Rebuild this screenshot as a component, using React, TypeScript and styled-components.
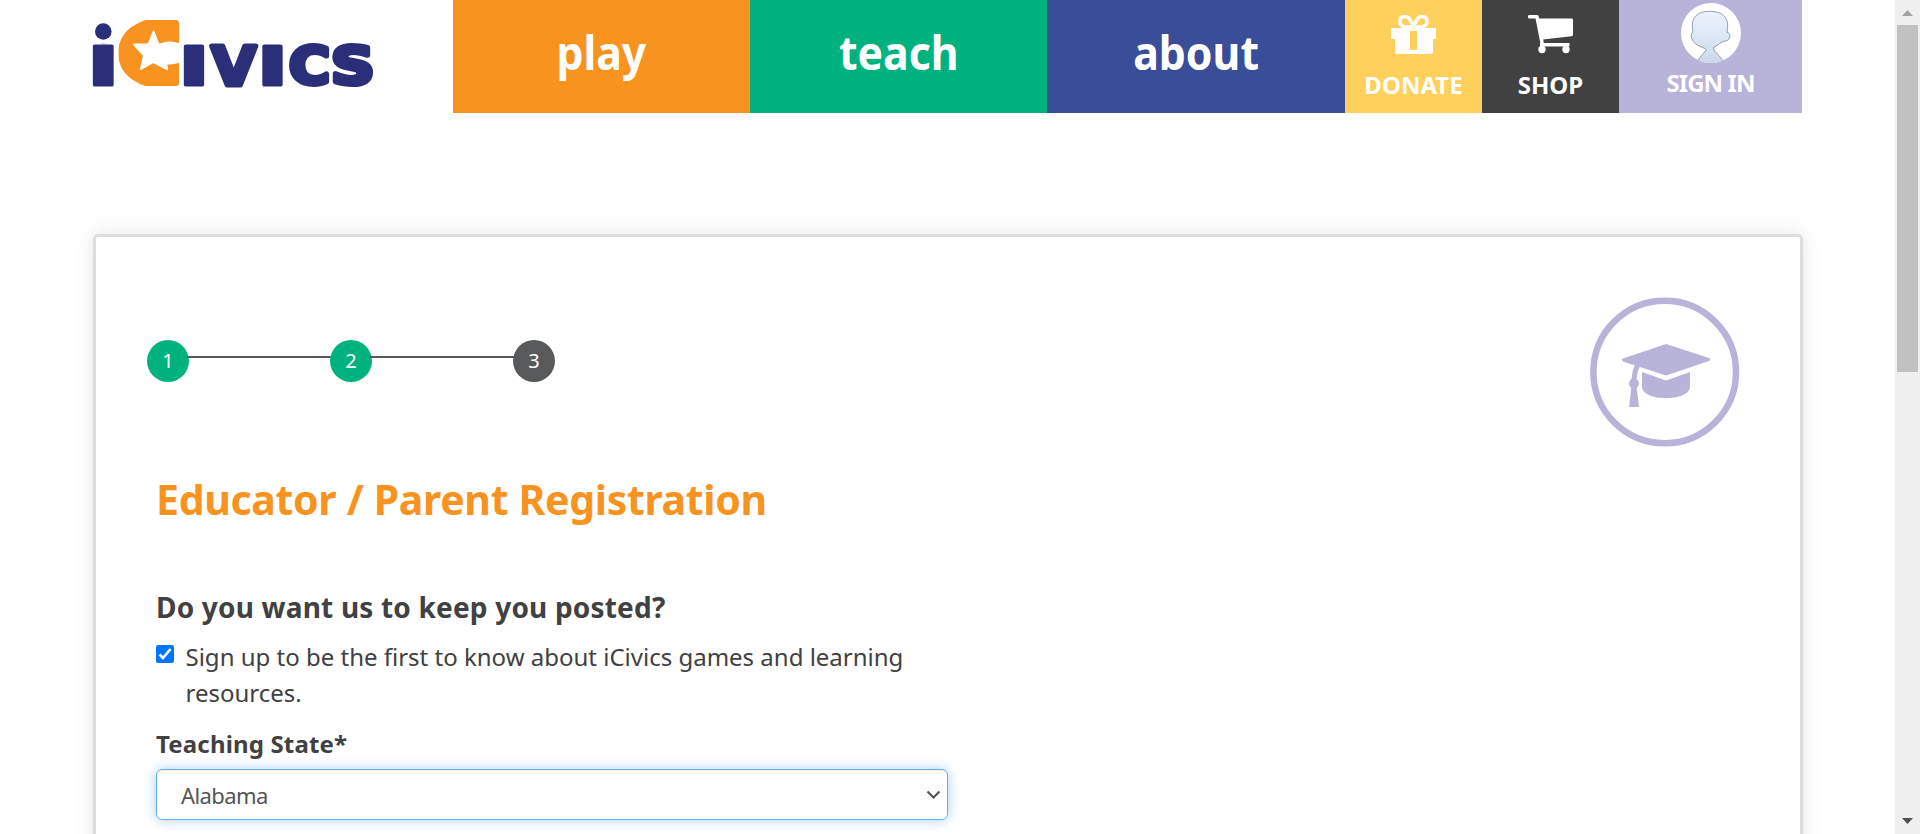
import React from "react";
import styled, { createGlobalStyle, css } from "styled-components";

const GlobalStyle = createGlobalStyle`
  * { box-sizing: border-box; }
  html, body { margin: 0; padding: 0; }
  body {
    background: #fff;
    color: #414042;
    font-family: "Noto Sans", sans-serif;
    font-size: 24px;
    overflow: hidden;
  }
`;

const Shell = styled.div`
  display: flex;
  height: 834px;
  overflow: hidden;
`;

const Page = styled.div`
  flex: 1;
  display: flex;
  flex-direction: column;
  padding: 0 92px 0 93px;
  overflow: hidden;
`;

const Header = styled.header`
  display: flex;
  height: 113px;
  flex-shrink: 0;
`;

const Brand = styled.a`
  width: 360px;
  padding-top: 15px;
`;

const NavLink = styled.a<{ $bg: string; $w: number }>`
  display: flex;
  align-items: center;
  justify-content: center;
  width: ${(p) => p.$w}px;
  background: ${(p) => p.$bg};
  color: #fff;
  font-size: 47px;
  font-weight: 700;
  line-height: 60px;
  padding-bottom: 10px;
`;

const NavWord = styled.span<{ $squeeze: number }>`
  display: inline-block;
  transform: scaleX(${(p) => p.$squeeze});
`;

const Action = styled.a<{ $bg: string; $w: number; $top: number; $gap: number }>`
  display: flex;
  flex-direction: column;
  align-items: center;
  gap: ${(p) => p.$gap}px;
  width: ${(p) => p.$w}px;
  padding-top: ${(p) => p.$top}px;
  background: ${(p) => p.$bg};
  color: #fff;
  font-size: 24px;
  font-weight: 700;
  line-height: 32px;
`;

const Card = styled.main`
  flex-shrink: 0;
  width: 1710px;
  height: 900px;
  margin-top: 121px;
  padding: 60px 60px 0;
  border: 3px solid #ddd;
  border-radius: 5px;
  box-shadow: 0 0 20px rgba(0, 0, 0, 0.1);
`;

const CardTop = styled.div`
  display: flex;
  justify-content: space-between;
  height: 150px;
  margin-left: -9px;
`;

const Steps = styled.ol`
  display: flex;
  margin: 43px 0 0;
  padding: 0;
  list-style: none;
`;

const Step = styled.li<{ $done?: boolean }>`
  display: flex;
  align-items: center;
  justify-content: center;
  width: 42px;
  height: 42px;
  border-radius: 50%;
  background: ${(p) => (p.$done ? "#00b27d" : "#58595b")};
  color: #fff;
  font-size: 20px;
  line-height: 28px;
`;

const StepLine = styled.li`
  width: 145px;
  height: 2px;
  margin: 16px -2px 0;
  background: #58595b;
`;

const Title = styled.h1`
  margin: 24px 0 0;
  color: #f7931e;
  font-size: 41px;
  font-weight: 700;
  line-height: 56px;
  white-space: nowrap;
`;

const Question = styled.h2`
  margin: 61px 0 0;
  font-size: 28px;
  font-weight: 700;
  line-height: 38px;
`;

const CheckRow = styled.label`
  display: flex;
  width: 792px;
  margin-top: 13px;
  line-height: 36px;
`;

const Checkbox = styled.span`
  display: flex;
  flex-shrink: 0;
  width: 18px;
  height: 18px;
  margin: 6px 11.5px 0 0;
  border-radius: 2.5px;
  background: #0075ff;
`;

const FieldLabel = styled.div`
  margin-top: 15px;
  font-weight: 700;
  line-height: 36px;
`;

const Select = styled.div`
  display: flex;
  align-items: center;
  justify-content: space-between;
  width: 792px;
  height: 51px;
  margin-top: 7px;
  padding: 0 6px 0 24px;
  border: 1px solid #66afe9;
  border-radius: 6px;
  box-shadow: inset 0 1px 1px rgba(0, 0, 0, 0.075), 0 0 12px rgba(102, 175, 233, 0.6);
  color: #555;
  font-size: 22px;
`;

const Fit = styled.span<{ $track: number }>`
  letter-spacing: ${(p) => p.$track}px;
`;

const ScrollTrack = styled.aside`
  display: flex;
  flex-direction: column;
  align-items: center;
  width: 25px;
  background: #f0f0f0;
`;

const ScrollThumb = styled.div`
  width: 21px;
  height: 347px;
  background: #c1c1c1;
`;

const ScrollArrow = styled.div<{ $down?: boolean }>`
  display: flex;
  justify-content: center;
  width: 25px;
  height: 25px;
  padding-top: ${(p) => (p.$down ? 9 : 10)}px;
  ${(p) => p.$down && css`margin-top: auto;`}
`;

function LogoLetter({ ch, x, w, size, y = 70, fill = "#2b2e78", stroke = 3, font = "DejaVu Sans", clip }: {
  ch: string; x: number; w: number; size: number; y?: number; fill?: string; stroke?: number; font?: string; clip?: string;
}) {
  return (
    <text
      x={x} y={y} fontFamily={`"${font}", sans-serif`} fontWeight={900} fontSize={size} clipPath={clip}
      textLength={w} lengthAdjust="spacingAndGlyphs"
      fill={fill} stroke={fill} strokeWidth={stroke} strokeLinejoin="round"
    >{ch}</text>
  );
}

const Logo = () => (
  <svg width="290" height="80" viewBox="0 0 290 80" overflow="visible" role="img" aria-label="iCivics">
    <defs>
      <clipPath id="mark"><rect x="25.500" y="5" width="60.500" height="66" rx="3" /></clipPath>
      <clipPath id="stem"><rect x="-2" y="28.500" width="26" height="44" /></clipPath>
    </defs>
    <LogoLetter ch="i" x={-4.3} w={29} size={71} font="Noto Sans" clip="url(#stem)" />
    <circle cx="10.300" cy="16.500" r="8.300" fill="#2b2e78" />
    <LogoLetter ch="C" x={29.5} w={74} size={76} y={66} fill="#f7931e" stroke={14} clip="url(#mark)" />
    <LogoLetter ch="I" x={85.5} w={31} size={54} />
    <LogoLetter ch="V" x={118.5} w={44.500} size={54} stroke={5} />
    <LogoLetter ch="I" x={164} w={31} size={54} />
    <LogoLetter ch="C" x={196} w={41} size={51} y={69} stroke={5} />
    <LogoLetter ch="S" x={238} w={43.500} size={51} y={69} stroke={5} />
    <path d="M60.500 16.500L65.500 29.500H88V46H73L74 54L60.500 47L48 54L51 40.500L41 29.500H55.500Z" fill="#fff" stroke="#fff" strokeWidth="2" strokeLinejoin="round" />
  </svg>
);

const GiftIcon = () => (
  <svg width="46" height="40" viewBox="0 0 46 40" fill="#fff">
    <path fillRule="evenodd" d="M1 13H44Q45 13 45 14V24H42V37Q41 39 40 39H6Q4 39 4 37V24H0V14Q0 13 1 13ZM19 16V34Q19 35 20 35H25Q26 35 26 34V16Z" />
    <path d="M21 12C15 12 9 12.500 9 6.500C9 0 17 0 19 5L22.500 11L26 5C28 0 36 0 36 6.500C36 12.500 30 12 24 12" fill="none" stroke="#fff" strokeWidth="3.500" />
  </svg>
);

const CartIcon = () => (
  <svg width="46" height="40" viewBox="0 0 46 40" fill="#fff">
    <path d="M1.500 1.800H9L14 27.500" fill="none" stroke="#fff" strokeWidth="3.500" strokeLinejoin="round" strokeLinecap="round" />
    <path d="M9 3.500H44Q45 3.500 45 5V19.500Q45 21 43.500 21.200L15 24.500ZM12 28H41.500V31.500H12Z" />
    <circle cx="14" cy="34.500" r="3.700" /><circle cx="38" cy="34.500" r="3.700" />
  </svg>
);

const Avatar = () => (
  <svg width="60" height="60" viewBox="0 0 60 60">
    <defs>
      <linearGradient id="skin" x1="0" y1="0" x2="0" y2="1">
        <stop offset="0" stopColor="#edf3ff" /><stop offset="1" stopColor="#cbd8e9" />
      </linearGradient>
      <clipPath id="round"><circle cx="30" cy="30" r="30" /></clipPath>
    </defs>
    <circle cx="30" cy="30" r="30" fill="#fff" />
    <g clipPath="url(#round)">
      <path d="M16 61C18 53 24 50 25 46.500C24 44 14 44 11 36C9.500 33 10 30 12 29C9 15 16 8.300 28.500 8.300C42 8.300 49 15 46 29.500C50 29 50 37 45 38C40 38 37 43 32.500 44.500C32 50 41 52 43 61Z" fill="url(#skin)" stroke="#8a929e" strokeWidth=".9" />
    </g>
  </svg>
);

const EducatorBadge = () => (
  <svg width="150" height="150" viewBox="0 0 150 150" fill="#b8b3d9">
    <circle cx="74.700" cy="75" r="71.300" fill="none" stroke="#b8b3d9" strokeWidth="6.500" />
    <path d="M76 47L119 61Q121 62.500 119 64L76 78.500L33 64.500Q31 62.500 33 61.500Z" />
    <path d="M52 75L76 83.500L100 75V89.500C100 105 52 105 52 89.500Z" />
    <path d="M49 67C45 71 44.500 77 44 83" fill="none" stroke="#b8b3d9" strokeWidth="5" />
    <circle cx="44" cy="86.500" r="5" /><path d="M41.500 89H46.500L49 110H39Z" />
  </svg>
);

export default function App() {
  return (
    <>
      <GlobalStyle />
      <Shell>
        <Page>
          <Header>
            <Brand><Logo /></Brand>
            <NavLink $bg="#f7931e" $w={297}><NavWord $squeeze={0.91}>play</NavWord></NavLink>
            <NavLink $bg="#00b27d" $w={297}><NavWord $squeeze={0.91}>teach</NavWord></NavLink>
            <NavLink $bg="#3a4d99" $w={298}><NavWord $squeeze={0.91}>about</NavWord></NavLink>
            <Action $bg="#ffd05c" $w={137} $top={15} $gap={14}><GiftIcon /><Fit $track={0}>DONATE</Fit></Action>
            <Action $bg="#414141" $w={137} $top={15} $gap={14}><CartIcon /><Fit $track={0}>SHOP</Fit></Action>
            <Action $bg="#b8b3d9" $w={183} $top={3} $gap={4}><Avatar /><Fit $track={-0.9}>SIGN IN</Fit></Action>
          </Header>
          <Card>
            <CardTop>
              <Steps>
                <Step $done>1</Step><StepLine /><Step $done>2</Step><StepLine /><Step>3</Step>
              </Steps>
              <EducatorBadge />
            </CardTop>
            <Title><Fit $track={-0.33}>Educator / Parent Registration</Fit></Title>
            <Question><Fit $track={0.19}>Do you want us to keep you posted?</Fit></Question>
            <CheckRow>
              <Checkbox role="checkbox" aria-checked="true">
                <svg width="18" height="18" viewBox="0 0 18 18"><path d="M3.500 9.500L7 13L14.500 4" fill="none" stroke="#fff" strokeWidth="2.600" /></svg>
              </Checkbox>
              <span>Sign up to be the first to know about iCivics games and learning resources.</span>
            </CheckRow>
            <FieldLabel><Fit $track={0.16}>Teaching State*</Fit></FieldLabel>
            <Select role="combobox">
              <Fit $track={-0.6}>Alabama</Fit>
              <svg width="15" height="10" viewBox="0 0 15 10"><path d="M1.500 1.500L7.500 7.500L13.500 1.500" fill="none" stroke="#555" strokeWidth="2.200" /></svg>
            </Select>
          </Card>
        </Page>
        <ScrollTrack>
          <ScrollArrow><svg width="11" height="6" viewBox="0 0 11 6"><path d="M0 6L5.500 0L11 6Z" fill="#a3a3a3" /></svg></ScrollArrow>
          <ScrollThumb />
          <ScrollArrow $down><svg width="11" height="6" viewBox="0 0 11 6"><path d="M0 0L5.500 6L11 0Z" fill="#505050" /></svg></ScrollArrow>
        </ScrollTrack>
      </Shell>
    </>
  );
}
